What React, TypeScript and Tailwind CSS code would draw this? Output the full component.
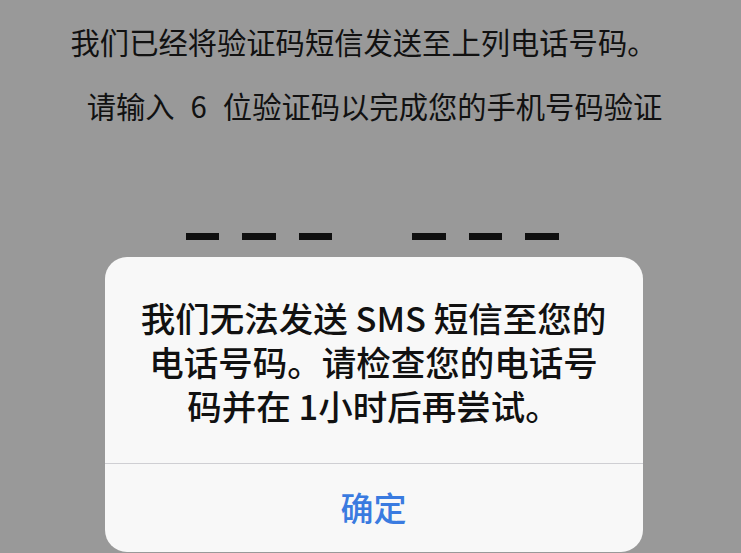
const cjk = { fontFamily: '"Noto Sans CJK SC", "Noto Sans", sans-serif' };

function Dashes() {
  return (
    <div className="flex gap-[23px]">
      {[0, 1, 2].map((i) => (
        <span key={i} className="h-[7px] w-[33.5px] bg-[#0f0f0f]" />
      ))}
    </div>
  );
}

export default function App() {
  return (
    <div
      className="flex h-[553px] w-[741px] flex-col items-center overflow-hidden bg-[#999999] text-[#111111]"
      style={cjk}
    >
      <p className="mt-[20px] pr-[14px] text-[29.3px] leading-[42px]">我们已经将验证码短信发送至上列电话号码。</p>
      <p className="mt-[22px] pl-[8px] text-[29.3px] leading-[42px]">
        请输入<span className="mx-[16px]">6</span>位验证码以完成您的手机号码验证
      </p>

      <div className="mt-[107px] flex gap-[80px] pl-[3px]">
        <Dashes />
        <Dashes />
      </div>

      <div className="ml-[6px] mt-[17px] flex w-[538px] shrink-0 flex-col rounded-[22px] bg-[#f8f8f8]">
        <p className="px-4 pb-[36px] pt-[38px] text-center text-[34.5px] font-medium leading-[44px] text-[#111111]">
          我们无法发送 SMS 短信至您的
          <br />
          电话号码。请检查您的电话号
          <br />
          码并在 1小时后再尝试。
        </p>
        <div className="h-px bg-[#cfcfd3]" />
        <button className="flex h-[88px] items-center justify-center text-[33px] font-medium text-[#3a7be0]">
          确定
        </button>
      </div>
    </div>
  );
}
